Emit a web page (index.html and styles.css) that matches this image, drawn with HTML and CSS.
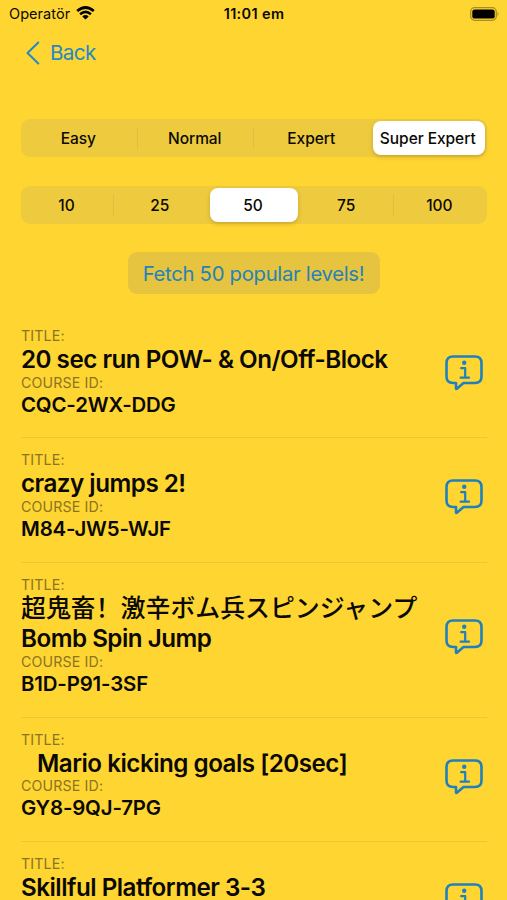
FILE: index.html
```
<!DOCTYPE html>
<html lang="sv">
<head>
<meta charset="utf-8">
<title>Popular levels</title>
<link rel="stylesheet" href="styles.css">
</head>
<body>
<svg class="defs" aria-hidden="true">
  <symbol id="info" viewBox="0 0 38 36">
    <path d="M8 1.5H30Q36.5 1.5 36.5 8V21.5Q36.5 28 30 28H18.5L11.8 33.8Q11 34.4 11 33.3V28H8Q1.5 28 1.5 21.5V8Q1.5 1.5 8 1.5Z" fill="none" stroke="currentColor" stroke-width="2.6" stroke-linejoin="round"/>
    <circle cx="19.2" cy="7.7" r="2.2" fill="currentColor"/>
    <path d="M16.2 13.2H20.2V22.7M15.6 22.7H24" fill="none" stroke="currentColor" stroke-width="2.2" stroke-linecap="round" stroke-linejoin="round"/>
  </symbol>
</svg>
<div class="screen">
  <header class="status">
    <div class="carrier"><span>Operatör</span>
      <svg class="wifi" viewBox="0 0 19 14"><path d="M1.2 5.1Q9.5-2.1 17.8 5.1" fill="none" stroke="#000" stroke-width="2.7"/><path d="M4.1 8.2Q9.5 3.6 14.9 8.2" fill="none" stroke="#000" stroke-width="2.5"/><path d="M6.3 10.4Q9.5 7.8 12.7 10.4L9.5 13.6Z"/></svg>
    </div>
    <div class="clock">11:01 em</div>
    <svg class="battery" viewBox="0 0 30 14"><rect x=".7" y=".7" width="25.6" height="12.6" rx="4" fill="none" stroke="#a88d26" stroke-width="1.3"/><rect x="2.3" y="2.4" width="22.4" height="9.2" rx="2.2"/><path d="M27.6 4.8Q29.6 7 27.6 9.2Z" fill="#a88d26"/></svg>
  </header>
  <nav class="nav"><a class="back"><svg class="chevron" viewBox="0 0 14 24"><path d="M12.3 1.5L1.5 12L12.3 22.5" fill="none" stroke="currentColor" stroke-width="2" stroke-linecap="round" stroke-linejoin="round"/></svg><span>Back</span></a></nav>
  <div class="segments difficulty"><div class="segment">Easy</div><div class="segment divided">Normal</div><div class="segment divided">Expert</div><div class="segment selected">Super Expert</div></div>
  <div class="segments count"><div class="segment">10</div><div class="segment divided">25</div><div class="segment selected">50</div><div class="segment">75</div><div class="segment divided">100</div></div>
  <button class="fetch"><span>Fetch 50 popular levels!</span></button>
  <main class="list">
    <article class="row"><div class="text"><div class="label"><span>TITLE:</span></div><div class="title"><span>20 sec run POW- &amp; On/Off-Block</span></div><div class="label"><span>COURSE ID:</span></div><div class="code"><span>CQC-2WX-DDG</span></div></div><svg class="info"><use href="#info"/></svg></article>
    <article class="row"><div class="text"><div class="label"><span>TITLE:</span></div><div class="title"><span>crazy jumps 2!</span></div><div class="label"><span>COURSE ID:</span></div><div class="code"><span>M84-JW5-WJF</span></div></div><svg class="info"><use href="#info"/></svg></article>
    <article class="row"><div class="text"><div class="label"><span>TITLE:</span></div><div class="title japanese" lang="ja">超鬼畜<span class="mark" lang="zh-Hans">！</span>激辛ボム兵スピンジャンプ</div><div class="title"><span>Bomb Spin Jump</span></div><div class="label"><span>COURSE ID:</span></div><div class="code"><span>B1D-P91-3SF</span></div></div><svg class="info"><use href="#info"/></svg></article>
    <article class="row"><div class="text"><div class="label"><span>TITLE:</span></div><div class="title indented"><span>Mario kicking goals [20sec]</span></div><div class="label"><span>COURSE ID:</span></div><div class="code"><span>GY8-9QJ-7PG</span></div></div><svg class="info"><use href="#info"/></svg></article>
    <article class="row last"><div class="text"><div class="label"><span>TITLE:</span></div><div class="title"><span>Skillful Platformer 3-3</span></div></div><svg class="info"><use href="#info"/></svg></article>
  </main>
</div>
</body>
</html>
```
FILE: styles.css
```
* { box-sizing: border-box; }
html, body { margin: 0; height: 900px; overflow: hidden; }
body { background: #ffd532; color: #0a0903; font-family: Inter, "Noto Sans CJK JP", sans-serif; }
.defs { display: block; width: 0; height: 0; }
.screen { height: 900px; overflow: hidden; display: flex; flex-direction: column; }
.status { flex: none; display: grid; grid-template-columns: 1fr auto 1fr; align-items: center; height: 27px; padding: 0 8px 0 9px; font-size: 14.5px; }
.carrier { display: flex; align-items: center; gap: 6px; letter-spacing: 0.05px; }
.wifi { width: 19px; height: 14px; margin-top: -1px; }
.clock { font-weight: 600; letter-spacing: 0.35px; }
.battery { width: 30px; height: 14px; justify-self: end; margin-right: -1px; }
.nav { flex: none; height: 92px; padding: 13.5px 0 0 26px; }
.back { display: flex; align-items: center; height: 24px; gap: 10px; color: #2489c5; font-size: 20.6px; letter-spacing: -0.6px; }
.chevron { width: 14px; height: 24px; }
.segments { flex: none; display: grid; height: 38px; margin: 0 20px 0 21px; padding: 2px 0; border-radius: 9px; background: #eeca3f; font-size: 15.5px; font-weight: 500; letter-spacing: 0; }
.difficulty { grid-template-columns: repeat(4, 1fr); letter-spacing: -0.05px; }
.count { grid-template-columns: repeat(5, 1fr); margin-top: 29px; }
.segment { display: flex; align-items: center; justify-content: center; white-space: nowrap; position: relative; padding-right: 2px; }
.divided::before { content: ""; position: absolute; left: -1px; top: 6px; width: 1px; height: 22px; background: #dfbf43; }
.selected { background: #fff; border-radius: 8px; box-shadow: 0 2px 4px rgba(90, 70, 0, .25); margin: 0 2px; }
.count .selected { margin: 0 3px; }
.fetch { flex: none; align-self: center; width: 252px; height: 42px; margin: 28px 0 0; padding: 0; border: 0; border-radius: 9px; background: #e6c43f; color: #2583b8; font: 400 20.3px Inter, sans-serif; letter-spacing: -0.3px; white-space: nowrap; }
.list { margin: 34px 20px 0 21px; }
.row { display: flex; align-items: center; padding: 14px 4px 19.8px 0; border-bottom: 1px solid #edc632; }
.row:first-child { padding-top: 0; }
.text { flex: 1; white-space: nowrap; }
.label { height: 16px; line-height: 16px; font-size: 14.2px; letter-spacing: 0.15px; color: #8b741f; }
.title { height: 30.6px; line-height: 31.4px; font-size: 24.2px; font-weight: 560; letter-spacing: -0.5px; }
.indented { padding-left: 16px; }
.japanese { font-family: "Noto Sans CJK JP", sans-serif; font-size: 24.9px; font-weight: 500; letter-spacing: 0; line-height: 27px; }
.mark { font-family: "Noto Sans CJK SC", sans-serif; }
.code { height: 27px; line-height: 27px; font-size: 20.4px; font-weight: 570; letter-spacing: -0.15px; }
.info { flex: none; width: 38px; height: 36px; color: #1f80be; }
.last { align-items: flex-start; }
.last .info { margin-top: 27px; }
```
